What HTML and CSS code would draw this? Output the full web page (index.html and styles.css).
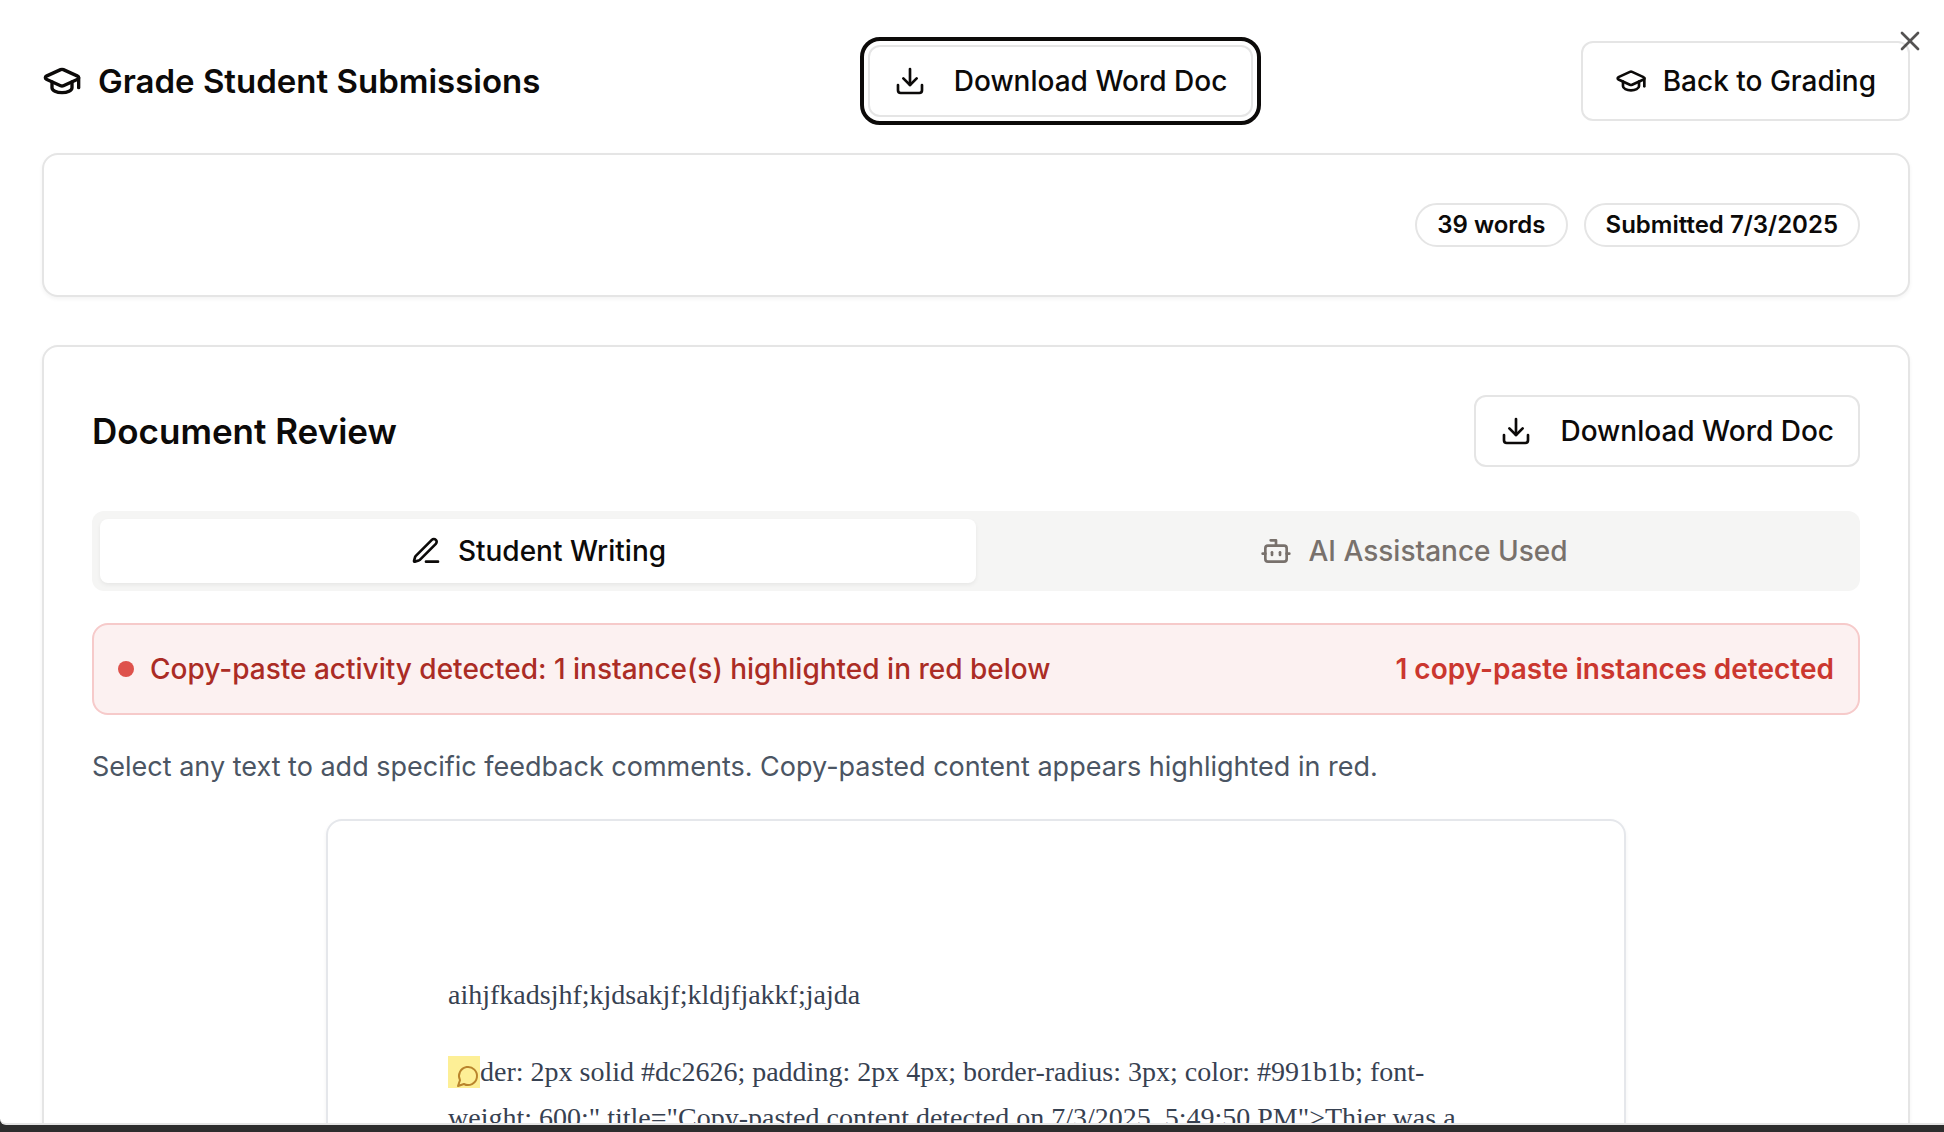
FILE: index.html
```html
<!DOCTYPE html>
<html lang="en">
<head>
<meta charset="utf-8">
<meta name="viewport" content="width=device-width, initial-scale=1">
<title>Grade Student Submissions</title>
<link rel="stylesheet" href="styles.css">
</head>
<body>
<svg class="sprite" aria-hidden="true">
  <symbol id="cap" viewBox="0 0 24 24"><path d="M21.42 10.922a1 1 0 0 0-.019-1.838L12.83 5.18a2 2 0 0 0-1.66 0L2.6 9.08a1 1 0 0 0 0 1.832l8.57 3.908a2 2 0 0 0 1.66 0z"/><path d="M22 10v6"/><path d="M6 12.5V16a6 3 0 0 0 12 0v-3.5"/></symbol>
  <symbol id="download" viewBox="0 0 24 24"><path d="M21 15v4a2 2 0 0 1-2 2H5a2 2 0 0 1-2-2v-4"/><path d="M7 10l5 5 5-5"/><path d="M12 15V3"/></symbol>
  <symbol id="pen" viewBox="0 0 24 24"><path d="M12 20h9"/><path d="M16.376 3.622a1 1 0 0 1 3.002 3.002L7.368 18.635a2 2 0 0 1-.855.506l-2.872.838a.5.5 0 0 1-.62-.62l.838-2.872a2 2 0 0 1 .506-.854z"/></symbol>
  <symbol id="bot" viewBox="0 0 24 24"><path d="M12 8V4H8"/><rect width="16" height="12" x="4" y="8" rx="2"/><path d="M2 14h2"/><path d="M20 14h2"/><path d="M15 13v2"/><path d="M9 13v2"/></symbol>
  <symbol id="comment" viewBox="0 0 24 24"><path d="M7.9 20A9 9 0 1 0 4 16.1L2 22Z"/></symbol>
  <symbol id="close" viewBox="0 0 24 24"><path d="M18 6 6 18"/><path d="m6 6 12 12"/></symbol>
</svg>

<main class="dialog" role="dialog" aria-labelledby="dialog-title">
  <header class="dialog-header">
    <h1 class="title" id="dialog-title"><svg class="icon icon-large"><use href="#cap"/></svg>Grade Student Submissions</h1>
    <button class="button button-download is-focused" type="button"><svg class="icon"><use href="#download"/></svg>Download Word Doc</button>
    <button class="button button-back" type="button"><svg class="icon"><use href="#cap"/></svg>Back to Grading</button>
  </header>

  <section class="card summary">
    <span class="badge">39 words</span>
    <span class="badge">Submitted 7/3/2025</span>
  </section>

  <section class="card review">
    <div class="review-header">
      <h2 class="subtitle">Document Review</h2>
      <button class="button button-download" type="button"><svg class="icon"><use href="#download"/></svg>Download Word Doc</button>
    </div>

    <div class="tabs" role="tablist">
      <button class="tab is-active" type="button" role="tab" aria-selected="true"><svg class="icon"><use href="#pen"/></svg>Student Writing</button>
      <button class="tab" type="button" role="tab" aria-selected="false"><svg class="icon"><use href="#bot"/></svg>AI Assistance Used</button>
    </div>

    <div class="alert">
      <span class="alert-dot"></span>
      <span class="alert-text">Copy-paste activity detected: 1 instance(s) highlighted in red below</span>
      <strong class="alert-count">1 copy-paste instances detected</strong>
    </div>

    <p class="hint">Select any text to add specific feedback comments. Copy-pasted content appears highlighted in red.</p>

    <article class="paper">
      <p>aihjfkadsjhf;kjdsakjf;kldjfjakkf;jajda</p>
      <p><mark class="note"><svg class="icon icon-small"><use href="#comment"/></svg></mark>der: 2px solid #dc2626; padding: 2px 4px; border-radius: 3px; color: #991b1b; font-weight: 600;" title="Copy-pasted content detected on 7/3/2025, 5:49:50 PM"&gt;Thier was a</p>
    </article>
  </section>

  <button class="close" type="button" aria-label="Close"><svg class="icon"><use href="#close"/></svg></button>
</main>
</body>
</html>
```
FILE: styles.css
```css
* {
  box-sizing: border-box;
}

body {
  margin: 0;
  background: #2d2d2d;
  color: #0c0a09;
  font-family: Inter, "Liberation Sans", sans-serif;
  font-size: 28px;
  line-height: 40px;
}

h1, h2, p {
  margin: 0;
}

button {
  font: inherit;
  font-weight: 500;
  color: inherit;
}

.sprite {
  display: none;
}

.icon {
  flex: none;
  width: 32px;
  height: 32px;
  fill: none;
  stroke: currentColor;
  stroke-width: 2;
  stroke-linecap: round;
  stroke-linejoin: round;
}

.icon-large {
  width: 40px;
  height: 40px;
}

.icon-small {
  width: 24px;
  height: 24px;
}

/* Dialog */
.dialog {
  position: relative;
  height: calc(100vh - 7px);
  padding: 41px 34px 0 42px;
  overflow: hidden;
  background: #fff;
  border-bottom: 2px solid #e5e5e5;
  border-bottom-left-radius: 6px;
}

.dialog-header {
  display: flex;
  align-items: center;
  justify-content: space-between;
  margin-bottom: 32px;
}

.title {
  display: flex;
  align-items: center;
  gap: 16px;
  font-size: 33px;
  font-weight: 600;
}

.subtitle {
  font-size: 35px;
  font-weight: 600;
}

.close {
  position: absolute;
  top: 25px;
  right: 18px;
  display: flex;
  padding: 0;
  background: none;
  border: 0;
  opacity: 0.7;
}

/* Buttons */
.button {
  display: flex;
  align-items: center;
  gap: 16px;
  background: #fff;
  border: 2px solid #e5e5e5;
  border-radius: 12px;
}

.button-download {
  gap: 28px;
  padding: 14px 24px;
}

.button-back {
  padding: 18px 32px;
}

.is-focused {
  outline: 4px solid #0c0a09;
  outline-offset: 4px;
}

/* Cards */
.card {
  padding: 48px;
  background: #fff;
  border: 2px solid #e5e5e5;
  border-radius: 16px;
  box-shadow: 0 2px 4px rgba(0, 0, 0, 0.05);
}

.summary {
  display: flex;
  justify-content: flex-end;
  gap: 16px;
  margin-bottom: 48px;
}

.badge {
  padding: 4px 20px;
  border: 2px solid #e5e5e5;
  border-radius: 22px;
  font-size: 24px;
  font-weight: 600;
  line-height: 32px;
}

.review-header {
  display: flex;
  align-items: center;
  justify-content: space-between;
  margin-bottom: 44px;
}

/* Tabs */
.tabs {
  display: grid;
  grid-template-columns: 1fr 1fr;
  padding: 8px;
  margin-bottom: 32px;
  background: #f5f5f4;
  border-radius: 12px;
  color: #78716c;
}

.tab {
  display: flex;
  align-items: center;
  justify-content: center;
  gap: 16px;
  padding: 12px 24px;
  background: none;
  border: 0;
  border-radius: 8px;
}

.tab.is-active {
  background: #fff;
  box-shadow: 0 2px 4px rgba(0, 0, 0, 0.06);
  color: #0c0a09;
}

/* Copy-paste alert */
.alert {
  display: flex;
  align-items: center;
  gap: 16px;
  padding: 24px;
  margin-bottom: 32px;
  background: #fcf1f1;
  border: 2px solid #f6caca;
  border-radius: 16px;
  color: #ab2c25;
  font-weight: 500;
}

.alert-dot {
  width: 16px;
  height: 16px;
  background: #de524c;
  border-radius: 50%;
}

.alert-count {
  margin-left: auto;
  color: #cb372f;
  font-weight: 600;
}

.hint {
  margin-bottom: 32px;
  color: #4b5563;
  font-size: 27px;
}

/* Student document */
.paper {
  max-width: 1300px;
  padding: 151px 120px;
  margin: 0 auto;
  border: 2px solid #e5e7eb;
  border-radius: 16px;
  box-shadow: 0 2px 4px rgba(0, 0, 0, 0.05);
  color: #374151;
  font-family: "Liberation Serif", "Times New Roman", serif;
  font-size: 28px;
  line-height: 46px;
}

.paper p + p {
  margin-top: 31px;
}

.note {
  display: inline-flex;
  align-items: flex-end;
  height: 32px;
  padding-left: 8px;
  background: #fdef96;
  color: #b9842c;
  vertical-align: -7px;
}
```
